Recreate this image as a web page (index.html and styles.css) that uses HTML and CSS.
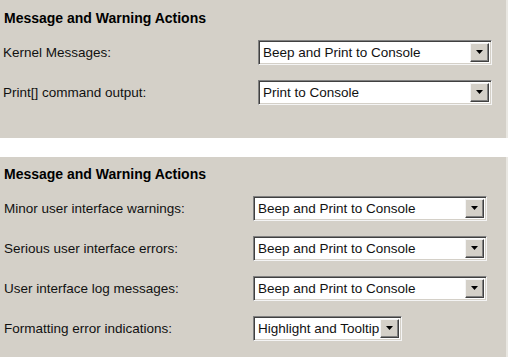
FILE: index.html
```html
<!DOCTYPE html>
<html lang="en">
  <head>
    <meta charset="UTF-8" />
    <meta name="viewport" content="width=device-width, initial-scale=1.0" />
    <title>Message and Warning Actions</title>
    <link rel="stylesheet" href="styles.css">
  </head>
  <body>
    <div class="panel panel-kernel">
      <h3>Message and Warning Actions</h3>
      <div class="row">
        <span class="label">Kernel Messages:</span>
        <div class="combo">
          <span class="value">Beep and Print to Console</span>
          <span class="drop"><svg width="9" height="5" viewBox="0 0 9 5"><path d="M1 0h7L4.5 4z" fill="#000"/></svg></span>
        </div>
      </div>
      <div class="row">
        <span class="label">Print[] command output:</span>
        <div class="combo">
          <span class="value">Print to Console</span>
          <span class="drop"><svg width="9" height="5" viewBox="0 0 9 5"><path d="M1 0h7L4.5 4z" fill="#000"/></svg></span>
        </div>
      </div>
    </div>

    <div class="panel panel-ui">
      <h3>Message and Warning Actions</h3>
      <div class="row">
        <span class="label">Minor user interface warnings:</span>
        <div class="combo">
          <span class="value">Beep and Print to Console</span>
          <span class="drop"><svg width="9" height="5" viewBox="0 0 9 5"><path d="M1 0h7L4.5 4z" fill="#000"/></svg></span>
        </div>
      </div>
      <div class="row">
        <span class="label">Serious user interface errors:</span>
        <div class="combo">
          <span class="value">Beep and Print to Console</span>
          <span class="drop"><svg width="9" height="5" viewBox="0 0 9 5"><path d="M1 0h7L4.5 4z" fill="#000"/></svg></span>
        </div>
      </div>
      <div class="row">
        <span class="label">User interface log messages:</span>
        <div class="combo">
          <span class="value">Beep and Print to Console</span>
          <span class="drop"><svg width="9" height="5" viewBox="0 0 9 5"><path d="M1 0h7L4.5 4z" fill="#000"/></svg></span>
        </div>
      </div>
      <div class="row">
        <span class="label">Formatting error indications:</span>
        <div class="combo combo-short">
          <span class="value">Highlight and Tooltip</span>
          <span class="drop"><svg width="9" height="5" viewBox="0 0 9 5"><path d="M1 0h7L4.5 4z" fill="#000"/></svg></span>
        </div>
      </div>
    </div>
  </body>
</html>
```

FILE: styles.css
```css
body {
  margin: 0;
  padding: 0;
  background: #fff;
  font-family: "Liberation Sans", Arial, sans-serif;
  font-size: 13.5px;
  color: #111;
}
.panel {
  background-color: #d4d0c8;
  width: 506px;
  border-right: 2px solid #e9e7e2;
  display: flex;
  flex-direction: column;
  gap: 15px;
}
.panel-kernel {
  padding: 10px 0 33px 0;
  --label-width: 254px;
  --label-pad: 3px;
}
.panel-ui {
  margin-top: 19px;
  padding: 9px 0 16px 0;
  --label-width: 249px;
  --label-pad: 4px;
}
h3 {
  margin: 0 0 -1px 4px;
  font-size: 14px;
  line-height: 16px;
  font-weight: bold;
  color: #000;
}
.row {
  display: flex;
  align-items: center;
  height: 25px;
}
.label {
  width: var(--label-width);
  padding-left: var(--label-pad);
  box-sizing: border-box;
  margin-right: 4px;
}
.combo {
  width: 234px;
  height: 25px;
  box-sizing: border-box;
  display: flex;
  background: #fff;
  border-top: 1px solid #808080;
  border-left: 1px solid #808080;
  border-right: 1px solid #f4f4f4;
  border-bottom: 1px solid #f4f4f4;
  box-shadow: inset 1px 1px 0 #404040, inset -1px -1px 0 #d4d0c8;
  padding: 2px;
}
.combo-short {
  width: 149px;
}
.value {
  flex: 1;
  padding-left: 2px;
  line-height: 19px;
  white-space: nowrap;
  overflow: hidden;
}
.drop {
  width: 19px;
  box-sizing: border-box;
  background: #d4d0c8;
  border-top: 1px solid #f4f4f4;
  border-left: 1px solid #f4f4f4;
  border-right: 1px solid #404040;
  border-bottom: 1px solid #404040;
  box-shadow: inset -1px -1px 0 #808080;
  display: flex;
  align-items: center;
  justify-content: center;
}
```
